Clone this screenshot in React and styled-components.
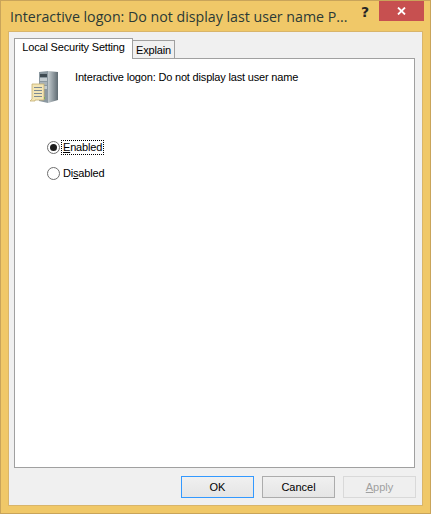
import React from "react";
import styled, { createGlobalStyle } from "styled-components";

const Global = createGlobalStyle`
  html, body { margin: 0; padding: 0; background: #f1c96a; }
  #root { width: 431px; height: 514px; }
`;

const UI_FONT = `"Liberation Sans", Arial, sans-serif`;

const Win = styled.div`
  box-sizing: border-box;
  width: 431px;
  height: 514px;
  background: #f0c868;
  border: 1px solid #c9a45a;
  padding: 0 7px 7px 7px;
  display: flex;
  flex-direction: column;
`;

const TitleBar = styled.div`
  height: 30px;
  flex: none;
  display: flex;
  align-items: flex-start;
  margin-right: -1px;
`;

const Title = styled.div`
  font-family: "Open Sans", "Noto Sans", sans-serif;
  font-size: 14.2px;
  line-height: 20px;
  color: #2b3a36;
  margin: 6px 0 0 2px;
  flex: 1;
  min-width: 0;
  white-space: nowrap;
`;

const Help = styled.div`
  width: 22px;
  height: 20px;
  flex: none;
  margin-top: 1px;
  margin-right: 3px;
  display: flex;
  align-items: center;
  justify-content: center;
  font: bold 14px "DejaVu Sans", sans-serif;
  color: #262626;
`;

const Close = styled.div`
  width: 45px;
  height: 20px;
  flex: none;
  background: #c75050;
  display: flex;
  align-items: center;
  justify-content: center;
`;

const Client = styled.div`
  flex: 1;
  background: #f0f0f0;
  border: 1px solid #d9b56a;
  padding: 6px 8px 7px 5px;
  display: flex;
  flex-direction: column;
  min-height: 0;
`;

const TabRow = styled.div`
  display: flex;
  align-items: flex-end;
  height: 21px;
  flex: none;
  margin-bottom: -1px;
  position: relative;
  z-index: 1;
`;

const Tab = styled.div`
  box-sizing: border-box;
  font-family: ${UI_FONT};
  font-size: 11px;
  letter-spacing: -0.18px;
  color: #000;
  height: ${(p) => (p.$active ? 21 : 19)}px;
  width: ${(p) => p.$w}px;
  background: ${(p) => (p.$active ? "#fff" : "#f0f0f0")};
  border: 1px solid #a0a0a0;
  border-bottom: ${(p) => (p.$active ? "none" : "1px solid #a0a0a0")};
  border-left: ${(p) => (p.$active ? "1px solid #a0a0a0" : "none")};
  text-align: center;
  line-height: ${(p) => (p.$active ? 17 : 18)}px;
`;

const Panel = styled.div`
  box-sizing: border-box;
  flex: 1;
  background: #fff;
  border: 1px solid #a0a0a0;
  width: 401px;
  padding: 11px 0 0 14px;
  font-family: ${UI_FONT};
  font-size: 11px;
  letter-spacing: -0.18px;
  color: #000;
`;

const Header = styled.div`
  display: flex;
  align-items: flex-start;
  gap: 14px;
`;

const HeaderText = styled.div`
  line-height: 14px;
`;

const Radios = styled.div`
  margin: 34px 0 0 18px;
  display: flex;
  flex-direction: column;
  gap: 12px;
`;

const RadioRow = styled.div`
  display: flex;
  align-items: center;
  height: 14px;
  gap: 2px;
`;

const RadioDot = styled.span`
  box-sizing: border-box;
  width: 13px;
  height: 13px;
  border-radius: 50%;
  border: 1px solid #6e6e6e;
  background: #fff;
  display: flex;
  align-items: center;
  justify-content: center;
  &::after {
    content: "";
    width: 7px;
    height: 7px;
    border-radius: 50%;
    background: ${(p) => (p.$on ? "#1c1c1c" : "transparent")};
  }
`;

const RadioLabel = styled.span`
  line-height: 13px;
  padding: 0 1px;
  outline: ${(p) => (p.$focus ? "1px dotted #000" : "none")};
`;

const Ul = styled.span`
  text-decoration: underline;
`;

const Footer = styled.div`
  flex: none;
  display: flex;
  justify-content: flex-end;
  gap: 8px;
  height: 30px;
  padding-top: 8px;
  box-sizing: border-box;
  margin-right: -2px;
`;

const Button = styled.div`
  box-sizing: border-box;
  width: 73px;
  height: 22px;
  border: 1px solid ${(p) => (p.$primary ? "#3399ff" : p.$disabled ? "#d9d9d9" : "#acacac")};
  background: ${(p) =>
    p.$disabled ? "#efefef" : "linear-gradient(#f0f0f0, #e5e5e5)"};
  color: ${(p) => (p.$disabled ? "#a0a0a0" : "#000")};
  font-family: ${UI_FONT};
  font-size: 11px;
  line-height: 20px;
  text-align: center;
`;

const ServerIcon = () => (
  <svg width="32" height="36" viewBox="0 0 32 36" style={{ flex: "none" }}>
    <defs>
      <linearGradient id="side" x1="0" x2="1" y1="0" y2="0">
        <stop offset="0" stopColor="#c3cbcf" />
        <stop offset="1" stopColor="#5f6b72" />
      </linearGradient>
    </defs>
    <polygon points="10,2 19,1 19,33 10,31" fill="#8b98a0" />
    <polygon points="19,1 29,2 29,30 19,33" fill="url(#side)" />
    <rect x="11" y="4" width="7" height="3" fill="#3f4b52" />
    <rect x="11" y="8" width="7" height="3" fill="#c4ccd0" />
    <rect x="11" y="12" width="7" height="3" fill="#a8b2b8" />
    <rect x="11" y="16" width="7" height="3" fill="#c4ccd0" />
    <rect x="14" y="27" width="2" height="2" fill="#58b048" />
    <polygon points="3,14 15,14 15,30 6,30 6,31 1,31 3,29" fill="#f3e5b5" stroke="#c4ae72" strokeWidth="0.8" />
    <rect x="5" y="17" width="8" height="1" fill="#7d8a92" />
    <rect x="5" y="20" width="8" height="1" fill="#7d8a92" />
    <rect x="5" y="23" width="8" height="1" fill="#7d8a92" />
    <rect x="5" y="26" width="8" height="1" fill="#7d8a92" />
  </svg>
);

const CloseX = () => (
  <svg width="9" height="8" viewBox="0 0 9 8">
    <path d="M1 0.5 L8 7.5 M8 0.5 L1 7.5" stroke="#fff" strokeWidth="1.8" fill="none" />
  </svg>
);

export default function App() {
  return (
    <>
      <Global />
      <Win>
        <TitleBar>
          <Title>Interactive logon: Do not display last user name P...</Title>
          <Help>?</Help>
          <Close><CloseX /></Close>
        </TitleBar>
        <Client>
          <TabRow>
            <Tab $active $w={119}>Local Security Setting</Tab>
            <Tab $w={42}>Explain</Tab>
          </TabRow>
          <Panel>
            <Header>
              <ServerIcon />
              <HeaderText>Interactive logon: Do not display last user name</HeaderText>
            </Header>
            <Radios>
              <RadioRow>
                <RadioDot $on />
                <RadioLabel $focus><Ul>E</Ul>nabled</RadioLabel>
              </RadioRow>
              <RadioRow>
                <RadioDot />
                <RadioLabel>Di<Ul>s</Ul>abled</RadioLabel>
              </RadioRow>
            </Radios>
          </Panel>
          <Footer>
            <Button $primary>OK</Button>
            <Button>Cancel</Button>
            <Button $disabled><Ul>A</Ul>pply</Button>
          </Footer>
        </Client>
      </Win>
    </>
  );
}
